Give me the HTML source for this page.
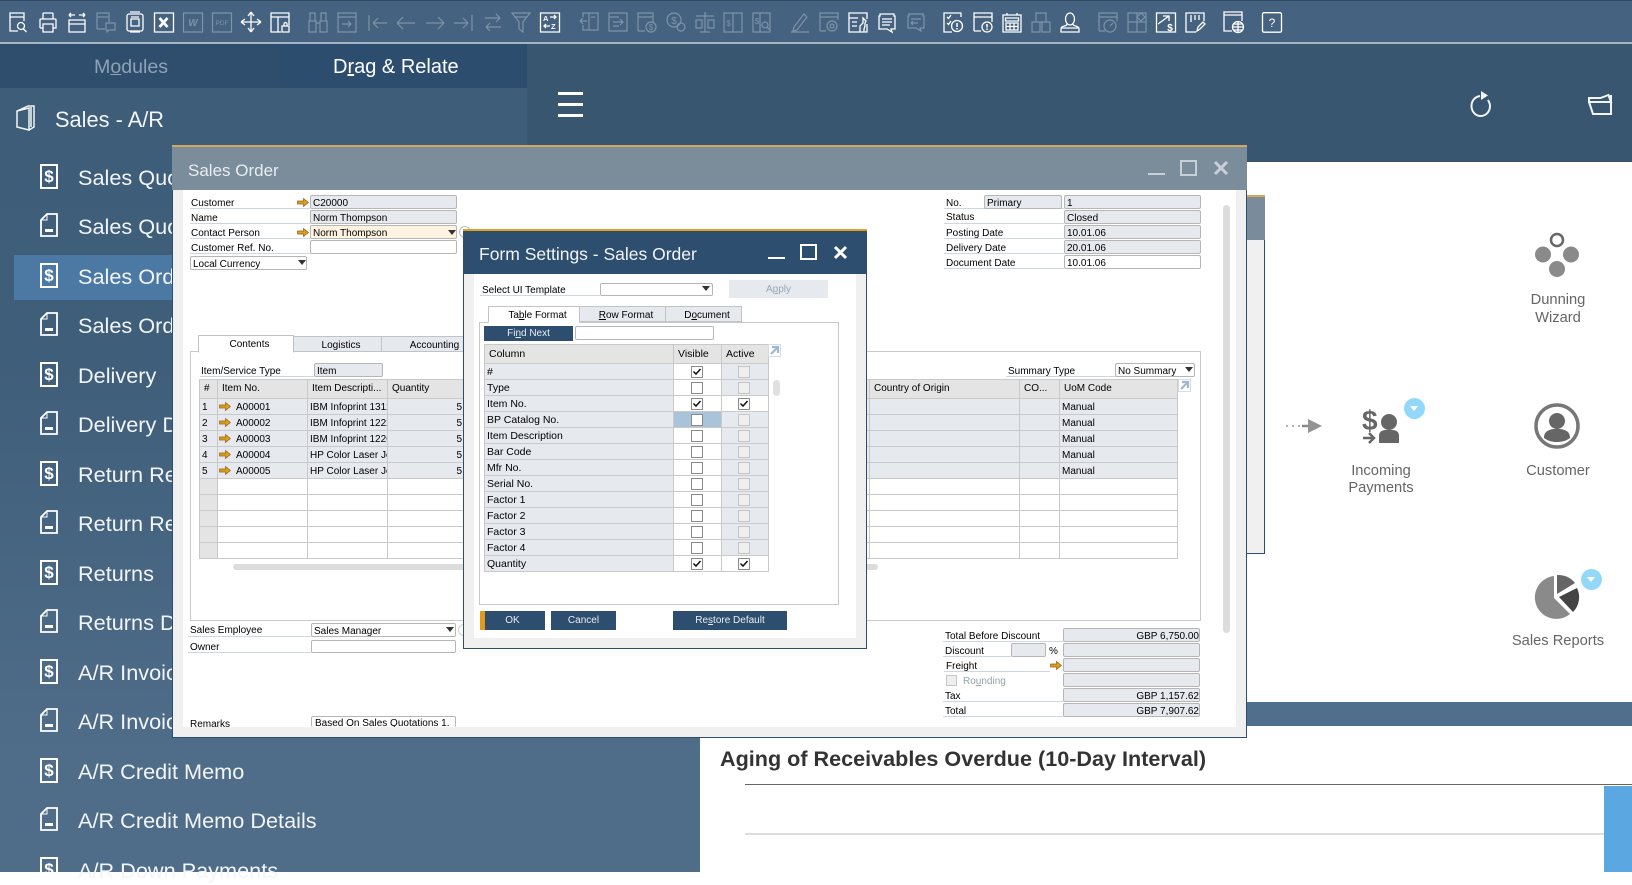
<!DOCTYPE html>
<html><head><meta charset="utf-8"><title>Sales Order</title>
<style>
html,body{margin:0;padding:0}
body{width:1632px;height:872px;position:relative;overflow:hidden;background:#fff;font-family:"Liberation Sans",Arial,sans-serif}
div,span.a,svg.a,table{position:absolute}
.b{left:0;top:0}
.s{left:78px;color:#f2f5f8;font-size:21.7px;line-height:28px;white-space:nowrap}
.di{left:40px;width:14px;height:21px;border:2px solid #fff;color:#fff;font:bold 17px/21px "Liberation Sans",sans-serif;text-align:center}
.dd{left:40px}
.w{font-size:10px;color:#000;line-height:14px;white-space:nowrap}
.t{font-size:10px;color:#000;line-height:16px;white-space:nowrap}
.u{height:1px;background:#ced6de}
.f{box-sizing:border-box;height:14px;border:1px solid #b6b6b6;border-radius:2px;background:#e6e9ee;font-size:10px;line-height:16px;padding-left:2px;color:#000;white-space:nowrap;overflow:hidden}
.o{background:#fff}
.tr{width:0;height:0;border-left:4px solid transparent;border-right:4px solid transparent;border-top:5px solid #333}
.tab{box-sizing:border-box;background:#e6e9ee;border:1px solid #bfc4c9;border-bottom:1px solid #bfc4c9;font-size:10px;color:#000;text-align:center;line-height:18px;padding-left:7px;white-space:nowrap;overflow:hidden}
.fr{box-sizing:border-box;border:1px solid #c9c9c9;background:#fff}
table{border-collapse:collapse;table-layout:fixed;font-size:10px;color:#000}
td{border:1px solid #c9c9c9;padding:0 0 0 2px;height:16px;line-height:14px;white-space:nowrap;overflow:hidden;box-sizing:border-box}
tr.h td{background:#e4e4e4;height:19px;padding-left:4px}
tr.g td{background:#e6e9ee}
.sg tr.g td{padding-top:2px;line-height:13px}
td.n{background:#e4e4e4!important}
td.p{background:#fff!important;padding:0}
td.q{background:#e6e9ee!important;padding:0}
td.bl{background:#a9c3d9!important;padding:0}
td.r{text-align:right;padding-right:1px}
.dlg{font-size:10.5px}
.ck{position:relative;display:block;box-sizing:border-box;width:12px;height:12px;margin:1px 0 0 17px;border:1px solid #8b8b8b;background:#fff}
.ck2{margin-left:16px}
.dis{border-color:#c5c5c5;background:#eee}
.ck svg{position:absolute;left:0;top:0}
.bt{box-sizing:border-box;height:19px;background:#2d4e6e;color:#e8edf2;font-size:10px;line-height:19px;text-align:center;white-space:nowrap}
.lb{font-size:14.7px;color:#666;text-align:center;line-height:18px;white-space:nowrap}
.badge{width:21px;height:21px;border-radius:50%;background:#93d8f8}
.badge:after{content:"";position:absolute;left:6px;top:8px;border-left:4.5px solid transparent;border-right:4.5px solid transparent;border-top:5px solid #fff}
svg .w1{fill:none;stroke:#fff;stroke-width:1.3}
svg .d1{fill:none;stroke:#7d93a8;stroke-width:1.2}
</style></head>
<body>
<svg width="0" height="0" style="position:absolute"><defs>
<symbol id="ar" viewBox="0 0 12 9"><path d="M.5 3H6.500V.5L11.500 4.500 6.500 8.500V6H.5z" fill="#e09a1c" stroke="#8a6414" stroke-width=".7"/></symbol>
<symbol id="chk" viewBox="0 0 10 10"><path d="M1.500 4.500l2.500 2.500 4.500-5" fill="none" stroke="#111" stroke-width="1.500"/></symbol>
<symbol id="ddoc" viewBox="0 0 18 24"><path d="M1 7 7 1h10v22H1z" fill="none" stroke="#fff" stroke-width="1.800"/><path d="M5 16h8v3H5z" fill="#fff"/><path d="M7 1v6H1" fill="none" stroke="#fff" stroke-width="1"/></symbol>
<symbol id="exp" viewBox="0 0 13 13"><path d="M.5.500h12v12H.500z" fill="#fff" stroke="#d5dde4"/><path d="M3 10 9 4M4 3h6v6" fill="none" stroke="#9db8d0" stroke-width="2.200"/></symbol>
</defs></svg>

<!-- backgrounds -->
<div class="b" style="width:1632px;height:44px;background:#456380"></div>
<div class="b" style="width:1632px;height:1px;background:#2f4a63"></div>
<div style="left:0;top:42px;width:1632px;height:2px;background:#a4b5c3"></div>
<div style="left:0;top:44px;width:1632px;height:118px;background:#38566f"></div>
<div style="left:0;top:88px;width:700px;height:784px;background:linear-gradient(#3e5d79,#3f5e7a 35%,#4f6d88 85%)"></div>
<div style="left:527px;top:88px;width:173px;height:74px;background:#38566f"></div>
<div style="left:0;top:44px;width:280px;height:44px;background:#2f4e6e"></div>
<div style="left:280px;top:44px;width:247px;height:44px;background:#2d4d6f"></div>
<div style="left:700px;top:162px;width:932px;height:710px;background:#fff"></div>
<div style="left:1240px;top:702px;width:392px;height:24px;background:#4f6f8c"></div>

<!-- toolbar icons -->
<svg class="a" style="left:0;top:0" width="1632" height="44" font-family="Liberation Sans">
<g transform="translate(9,12)" class="w1"><path class="w1" d="M15 9V1H1v18h8M1 5h14M14 16.500l3.500 3.500"/><circle class="w1" cx="12" cy="14" r="3.500"/></g>
<g transform="translate(38,12)"><path class="w1" d="M5 7V2a1 1 0 0 1 1-1h8a1 1 0 0 1 1 1v5M2 16V8a1 1 0 0 1 1-1h14a1 1 0 0 1 1 1v8H15M5 16H2M5 12h10v8H5z"/></g>
<g transform="translate(67,12)"><path class="w1" d="M2 8h16v12H2zM2 12h16M2 3h6M2 3l2-2M2 3l2 2M12 3h6M18 3l-2-2M18 3l-2 2"/></g>
<g transform="translate(96,12)"><path class="d1" d="M1 17V1h12v9M1 5h12M1 17h8"/><path class="d1" d="M10 11h9v7h-6l-2 2v-2h-1z"/></g>
<g transform="translate(125,12)"><path class="w1" d="M2 4a2 2 0 0 1 2-2h12a2 2 0 0 1 2 2v13a2 2 0 0 1-2 2H4a2 2 0 0 1-2-2zM6 7h8v7H6zM6 5h8M5 0h10M5 20h10"/></g>
<g transform="translate(154,12)"><path class="w1" d="M.5 1h19v19H.5z"/><path d="M5.500 6l8 9M13.500 6l-8 9" stroke="#fff" stroke-width="2.800" fill="none"/></g>
<g transform="translate(183,12)"><path class="d1" d="M.5 1h19v19H.5z"/><text x="10" y="14" fill="#7d93a8" font-size="10" font-weight="bold" font-style="italic" text-anchor="middle">W</text></g>
<g transform="translate(212,12)"><path class="d1" d="M.5 1h19v19H.5z"/><text x="10" y="13" fill="#7d93a8" font-size="6.500" text-anchor="middle">PDF</text></g>
<g transform="translate(241,12)"><path class="w1" d="M10 0v20M0 10h20M10 0 7 4M10 0l3 4M0 10l4-3M0 10l4 3M20 10l-4-3M20 10l-4 3M10 20l-3-4M10 20l3-4"/></g>
<g transform="translate(270,12)"><path class="w1" d="M1 1h18v4H1zM1 5v15h10M8 5v15M19 5v8M12 14h7v6h-7zM14 14v-2a1.500 1.500 0 0 1 3 0v2"/></g>
<g transform="translate(308,12)"><path class="d1" d="M1 9h7v11H1zM12 9h7v11h-7zM8 11h4M2 9V1h5v8M13 9V1h5v8"/></g>
<g transform="translate(337,12)"><path class="d1" d="M1 1h18v19H1zM1 5h18M5 12h9M11 9l3 3-3 3"/></g>
<g transform="translate(368,12)"><path class="d1" d="M1 3v16M5 11h14M5 11l5-5M5 11l5 5"/></g>
<g transform="translate(396,12)"><path class="d1" d="M1 11h18M1 11l6-6M1 11l6 6"/></g>
<g transform="translate(425,12)"><path class="d1" d="M1 11h18M19 11l-6-6M19 11l-6 6"/></g>
<g transform="translate(453,12)"><path class="d1" d="M19 3v16M1 11h14M15 11l-5-5M15 11l-5 5"/></g>
<g transform="translate(483,12)"><path class="d1" d="M2 6h15M17 6l-4-4M17 6l-4 4M18 15H3M3 15l4-4M3 15l4 4"/></g>
<g transform="translate(511,12)"><path class="d1" d="M1 1h18l-7 9v10l-4-3V10zM4 5h12"/></g>
<g transform="translate(540,12)"><path class="w1" d="M.5 1h19v19H.5z"/><text x="3" y="9" fill="#fff" font-size="7.500" font-weight="bold">A</text><text x="11" y="17" fill="#fff" font-size="7.500" font-weight="bold">Z</text><path class="w1" stroke-width="1" d="M10 5h6M14 3l2 2-2 2M10 14H4M6 12l-2 2 2 2"/></g>
<g transform="translate(579,12)"><path class="d1" d="M4 5V1h15v17H4v-5M4 5v0M10 1v17M1 9h7M1 9l3-3M1 9l3 3M12 5h4"/></g>
<g transform="translate(608,12)"><path class="d1" d="M1 1h18v18H1zM1 5h10M5 10h10M12 7l3 3-3 3M5 14h6"/></g>
<g transform="translate(637,12)"><path class="d1" d="M1 19V1h15v9M1 5h15M1 19h7"/><circle class="d1" cx="14" cy="15" r="5"/><text x="14" y="18" fill="#7d93a8" font-size="8" text-anchor="middle">$</text></g>
<g transform="translate(666,12)"><circle class="d1" cx="8" cy="8" r="7"/><text x="8" y="12" fill="#7d93a8" font-size="10" text-anchor="middle">$</text><circle class="d1" cx="15" cy="15" r="4"/></g>
<g transform="translate(695,12)"><path class="d1" d="M10 0v20M5 20h10M1 4h18M1 8v8h6V8zM13 8v8h6V8z"/></g>
<g transform="translate(723,12)"><path class="d1" d="M1 1h18v19H1zM10 1v19"/><text x="5.500" y="14" fill="#7d93a8" font-size="8" text-anchor="middle">$</text></g>
<g transform="translate(752,12)"><path class="d1" d="M1 1h17v19H1zM8 1v19"/><text x="5" y="12" fill="#7d93a8" font-size="8" text-anchor="middle">$</text><circle class="d1" cx="13" cy="13" r="3"/><path class="d1" d="M15 15l3 3"/></g>
<g transform="translate(790,12)"><path class="d1" d="M1 20h18M4 15 14 2l3 3L7 18l-4 1z"/></g>
<g transform="translate(819,12)"><path class="d1" d="M1 19V1h18v7M1 5h18M1 19h6"/><circle class="d1" cx="13" cy="14" r="5"/><circle class="d1" cx="13" cy="14" r="2"/></g>
<g transform="translate(848,12)"><path class="w1" d="M19 7V1H1v19h18v-8M1 6h9M4 10h5M4 14h5M12 20v-6l3-3V6l3 3-1 2v3l-1 3v3"/></g>
<g transform="translate(877,12)"><path class="w1" d="M3 2h14v2h1v13h-4l1 3-5-3H2V4h1zM5 7h10M5 10h10M5 13h8"/></g>
<g transform="translate(906,12)"><path class="d1" d="M3 2h14v2h1v12h-4l1 3-5-3H2V4h1zM5 7h10M5 11h7M5 11l2-2M5 11l2 2"/></g>
<g transform="translate(943,12)"><path class="w1" d="M18 5V1H1v19h8M4 5l1.500 1.500L8 3M4 11l1.500 1.500L8 9"/><circle class="w1" cx="14" cy="14" r="5.500"/><path d="M14 11v4M14 16v1.500" stroke="#fff" stroke-width="1.500"/></g>
<g transform="translate(973,12)"><path class="w1" d="M1 19V1h18v9M1 5h18M1 19h7"/><circle class="w1" cx="14" cy="15" r="5"/><path d="M14 12v3.500M14 16.500V18" stroke="#fff" stroke-width="1.500"/></g>
<g transform="translate(1002,12)"><path class="w1" d="M1 3h18v17H1zM5 1v2M15 1v2M3.500 6h13v3h-13zM4 11h12v7H4zM8 11v7M12 11v7M4 14.500h12"/></g>
<g transform="translate(1031,12)"><path class="d1" d="M5 1h10v9H5zM1 10h8v10H1zM11 10h8v10h-8z"/></g>
<g transform="translate(1060,12)"><ellipse class="w1" cx="10" cy="7" rx="4.500" ry="6"/><path class="w1" d="M7 12c0 3-6 1-6 5v3h18v-3c0-4-6-2-6-5"/><path class="w1" d="M1 16h18"/></g>
<g transform="translate(1098,12)"><path class="d1" d="M1 19V1h18v8M1 5h18M1 19h6"/><circle class="d1" cx="12" cy="14" r="6"/><path class="d1" d="M12 14l3-3"/></g>
<g transform="translate(1127,12)"><path class="d1" d="M1 1h18v19H1zM1 10h18M10 1v19"/><path class="d1" d="M10 5l4-4 4 4-4 4z"/></g>
<g transform="translate(1156,12)"><path class="w1" d="M.5 1h19v19H.5zM2 12 13 4M7 4h6v5"/><text x="14" y="19" fill="#fff" font-size="10" font-weight="bold" text-anchor="middle">$</text></g>
<g transform="translate(1185,12)"><path class="w1" d="M19 9V1H1v19h10M6 10V3M10 8V3M14 8V3"/><path class="w1" d="M12 19l1-4 5-5 2 2-5 5z"/></g>
<g transform="translate(1223,11)"><path class="w1" d="M1 15V1h18v9M1 4h18"/><path class="w1" d="M1 15v5h8"/><circle class="w1" cx="15" cy="16" r="5.500"/><path class="w1" stroke-width="1" d="M9.500 16h11M15 10.500v11M11 13h8M11 19h8"/></g>
<g transform="translate(1262,12)"><rect class="w1" x=".5" y=".7" width="19" height="19.500" rx="1.500"/><text x="10" y="15" fill="#fff" font-size="12" text-anchor="middle">?</text></g>
</svg>

<!-- module tabs -->
<div class="w" style="left:94px;top:54px;font-size:19.600px;line-height:26px;color:#8ea2b4">M<u>o</u>dules</div>
<div class="w" style="left:333px;top:54px;font-size:20px;line-height:26px;color:#fff">D<u>r</u>ag &amp; Relate</div>

<!-- hamburger + top icons -->
<div style="left:558px;top:92px;width:25px;height:3px;background:#fff"></div>
<div style="left:558px;top:103px;width:25px;height:3px;background:#fff"></div>
<div style="left:558px;top:114px;width:25px;height:3px;background:#fff"></div>
<svg class="a" style="left:1468px;top:90px" width="28" height="30"><path d="M12 6C6.500 7 3.500 11 3.500 16c0 5.500 4 10 9 10 6 0 9.500-5 9.500-10 0-2.500-1-4-2-6" fill="none" stroke="#f2f5f8" stroke-width="2"/><path d="M13 1v9l7-4.500z" fill="#f2f5f8"/></svg>
<svg class="a" style="left:1586px;top:93px" width="28" height="24"><path d="M3 9h22l-2.500-7-8 3H3zM3 9l4 12h18V2" fill="none" stroke="#f2f5f8" stroke-width="2"/></svg>

<!-- sidebar -->
<svg class="a" style="left:14px;top:105px" width="24" height="27"><path d="M3 6 15 3v22L3 22zM3 6l11-5h6v21l-5 3M17 2v20" fill="none" stroke="#f2f5f8" stroke-width="1.500"/></svg>
<div class="s" style="left:55px;top:106px;font-size:21.800px">Sales - A/R</div>
<div style="left:14px;top:255px;width:200px;height:45px;background:#4b79a4"></div>

<div class="di" style="top:164px">$</div><div class="s" style="top:164px">Sales Quotation</div>
<svg class="a" style="left:40px;top:213px" width="18" height="24"><use href="#ddoc"/></svg><div class="s" style="top:213px">Sales Quotation Details</div>
<div class="di" style="top:263px">$</div><div class="s" style="top:263px">Sales Order</div>
<svg class="a" style="left:40px;top:312px" width="18" height="24"><use href="#ddoc"/></svg><div class="s" style="top:312px">Sales Order Details</div>
<div class="di" style="top:362px">$</div><div class="s" style="top:362px">Delivery</div>
<svg class="a" style="left:40px;top:411px" width="18" height="24"><use href="#ddoc"/></svg><div class="s" style="top:411px">Delivery Details</div>
<div class="di" style="top:461px">$</div><div class="s" style="top:461px">Return Request</div>
<svg class="a" style="left:40px;top:510px" width="18" height="24"><use href="#ddoc"/></svg><div class="s" style="top:510px">Return Request Details</div>
<div class="di" style="top:560px">$</div><div class="s" style="top:560px">Returns</div>
<svg class="a" style="left:40px;top:609px" width="18" height="24"><use href="#ddoc"/></svg><div class="s" style="top:609px">Returns Details</div>
<div class="di" style="top:659px">$</div><div class="s" style="top:659px">A/R Invoice</div>
<svg class="a" style="left:40px;top:708px" width="18" height="24"><use href="#ddoc"/></svg><div class="s" style="top:708px">A/R Invoice Details</div>
<div class="di" style="top:758px">$</div><div class="s" style="top:758px">A/R Credit Memo</div>
<svg class="a" style="left:40px;top:807px" width="18" height="24"><use href="#ddoc"/></svg><div class="s" style="top:807px">A/R Credit Memo Details</div>
<div class="di" style="top:857px">$</div><div class="s" style="top:857px">A/R Down Payments</div>

<!-- right panel content -->
<svg class="a" style="left:1532px;top:228px" width="50" height="52"><circle cx="25" cy="12" r="6" fill="none" stroke="#666" stroke-width="2.500"/><circle cx="11" cy="26.500" r="8" fill="#8a8a8a"/><circle cx="39" cy="26.500" r="8" fill="#8a8a8a"/><circle cx="25" cy="41" r="8" fill="#8a8a8a"/></svg>
<div class="lb" style="left:1508px;width:100px;top:291px">Dunning</div>
<div class="lb" style="left:1508px;width:100px;top:309px">Wizard</div>

<svg class="a" style="left:1284px;top:414px" width="42" height="24"><path d="M2 12h16" stroke="#999" stroke-width="1.500" stroke-dasharray="2 4" fill="none"/><path d="M18 12h11" stroke="#888" stroke-width="2.500"/><path d="M24 5l14 7-14 7z" fill="#939393"/></svg>
<svg class="a" style="left:1360px;top:403px" width="44" height="44" font-family="Liberation Sans"><text x="2" y="27" font-size="28" font-weight="bold" fill="#666">$</text><circle cx="29" cy="19" r="8" fill="#666"/><path d="M19 40V33c0-5 4-6 7-6h6c3 0 7 1 7 6v7z" fill="#666"/><path d="M3 35h9M9 30l5 5-5 5" fill="none" stroke="#666" stroke-width="2.500"/></svg>
<div class="badge" style="left:1404px;top:398px"></div>
<div class="lb" style="left:1331px;width:100px;top:462px">Incoming</div>
<div class="lb" style="left:1331px;width:100px;top:479px">Payments</div>

<svg class="a" style="left:1533px;top:402px" width="48" height="48"><circle cx="24" cy="24" r="21" fill="none" stroke="#777" stroke-width="3.500"/><circle cx="24" cy="19" r="8" fill="#666"/><path d="M11 36c0-7 5-8 9-9h8c4 1 9 2 9 9-4 3-8 4-13 4s-9-1-13-4z" fill="#666"/></svg>
<div class="lb" style="left:1508px;width:100px;top:462px">Customer</div>

<svg class="a" style="left:1530px;top:570px" width="54" height="54"><path d="M24 6V28L40 44A21.500 21.500 0 1 1 24 6z" fill="#8a8a8a"/><path d="M27 5V24L45 13A21 21 0 0 0 27 5z" fill="#666"/><path d="M29 27 47 18A21 21 0 0 1 43 42z" fill="#444"/></svg>
<div class="badge" style="left:1581px;top:569px"></div>
<div class="lb" style="left:1500px;width:116px;top:632px">Sales Reports</div>

<div class="w" style="left:720px;top:745px;font-size:21.600px;line-height:28px;font-weight:bold;color:#333">Aging of Receivables Overdue (10-Day Interval)</div>
<div style="left:745px;top:784px;width:887px;height:1px;background:#666"></div>
<div style="left:745px;top:833px;width:859px;height:2px;background:#ddd"></div>
<div style="left:1604px;top:786px;width:28px;height:86px;background:#5ba7e2"></div>

<!-- window behind -->
<div style="left:1240px;top:195px;width:25px;height:359px;box-sizing:border-box;background:#f0f0f0;border-right:1px solid #2d4e6e;border-bottom:1px solid #2d4e6e"></div>
<div style="left:1240px;top:195px;width:25px;height:45px;background:#7a8c9b;border-top:2px solid #d4a85a;box-sizing:border-box"></div>

<!-- Sales Order window -->
<div style="left:172px;top:145px;width:1075px;height:593px;box-sizing:border-box;background:#f0f0f0;border:1px solid #2d4e6e;border-top:0"></div>
<div style="left:183px;top:190px;width:1053px;height:537px;background:#fff"></div>
<div style="left:172px;top:145px;width:1075px;height:45px;box-sizing:border-box;background:#7b8c9b;border-top:2px solid #d2a860"></div>
<div class="w" style="left:188px;top:159px;font-size:17px;line-height:24px;color:#e8edf1">Sales Order</div>
<div style="left:1148px;top:173px;width:17px;height:2px;background:#c7d0d8"></div>
<div style="left:1180px;top:160px;width:17px;height:16px;box-sizing:border-box;border:2px solid #c7d0d8"></div>
<svg class="a" style="left:1213px;top:160px" width="16" height="16"><path d="M2 2 14 14M14 2 2 14" stroke="#c7d0d8" stroke-width="3"/></svg>

<!-- top-left fields -->
<div class="u" style="left:190px;top:208px;width:120px"></div>
<div class="u" style="left:190px;top:223px;width:120px"></div>
<div class="u" style="left:190px;top:238px;width:120px"></div>
<div class="u" style="left:190px;top:253px;width:120px"></div>
<div class="t" style="left:191px;top:196px">Customer</div>
<div class="t" style="left:191px;top:211px">Name</div>
<div class="t" style="left:191px;top:226px">Contact Person</div>
<div class="t" style="left:191px;top:241px">Customer Ref. No.</div>
<svg class="a" style="left:297px;top:198px" width="12" height="9"><use href="#ar"/></svg>
<svg class="a" style="left:297px;top:228px" width="12" height="9"><use href="#ar"/></svg>
<div class="f" style="left:310px;top:195px;width:147px">C20000</div>
<div class="f" style="left:310px;top:210px;width:147px">Norm Thompson</div>
<div class="f" style="left:310px;top:225px;width:147px;background:#fdf3e0">Norm Thompson</div>
<div class="tr" style="left:448px;top:230px"></div>
<div class="f o" style="left:310px;top:240px;width:147px"></div>
<div class="f o" style="left:190px;top:256px;width:117px">Local Currency</div>
<div class="tr" style="left:298px;top:260px"></div>
<div style="left:459px;top:226px;width:12px;height:12px;box-sizing:border-box;border:1px solid #bbb;border-radius:50%;background:#fff"></div>

<!-- top-right fields -->
<div class="u" style="left:944px;top:208px;width:120px"></div>
<div class="u" style="left:944px;top:223px;width:120px"></div>
<div class="u" style="left:944px;top:238px;width:120px"></div>
<div class="u" style="left:944px;top:253px;width:120px"></div>
<div class="u" style="left:944px;top:268px;width:120px"></div>
<div class="t" style="left:946px;top:196px">No.</div>
<div class="t" style="left:946px;top:210px">Status</div>
<div class="t" style="left:946px;top:226px">Posting Date</div>
<div class="t" style="left:946px;top:241px">Delivery Date</div>
<div class="t" style="left:946px;top:256px">Document Date</div>
<div class="f" style="left:984px;top:195px;width:78px">Primary</div>
<div class="f" style="left:1064px;top:195px;width:137px">1</div>
<div class="f" style="left:1064px;top:210px;width:137px">Closed</div>
<div class="f" style="left:1064px;top:225px;width:137px">10.01.06</div>
<div class="f" style="left:1064px;top:240px;width:137px">20.01.06</div>
<div class="f o" style="left:1064px;top:255px;width:137px">10.01.06</div>

<!-- scrollbars -->
<div style="left:1223px;top:205px;width:7px;height:428px;border-radius:4px;background:#dcdcdc"></div>

<!-- tabs & frame -->
<div class="fr" style="left:190px;top:351px;width:1011px;height:270px"></div>
<div class="tab" style="left:198px;top:335px;width:96px;height:18px;background:#fff;border-bottom:1px solid #fff">Contents</div>
<div class="tab" style="left:293px;top:336px;width:89px;height:16px">Logistics</div>
<div class="tab" style="left:381px;top:336px;width:100px;height:16px">Accounting</div>

<div class="u" style="left:200px;top:376px;width:114px"></div>
<div class="t" style="left:201px;top:364px">Item/Service Type</div>
<div class="f" style="left:314px;top:363px;width:69px">Item</div>
<div class="u" style="left:1006px;top:376px;width:110px"></div>
<div class="t" style="left:1008px;top:364px">Summary Type</div>
<div class="f o" style="left:1115px;top:363px;width:80px">No Summary</div>
<div class="tr" style="left:1185px;top:367px"></div>
<svg class="a" style="left:1178px;top:379px" width="13" height="13"><use href="#exp"/></svg>

<table class="sg" style="left:199px;top:379px;width:978px">
<colgroup><col style="width:18px"><col style="width:90px"><col style="width:80px"><col style="width:76px"><col style="width:406px"><col style="width:150px"><col style="width:40px"><col style="width:118px"></colgroup>
<tr class="h"><td>#</td><td>Item No.</td><td>Item Descripti...</td><td>Quantity</td><td></td><td>Country of Origin</td><td>CO...</td><td>UoM Code</td></tr>
<tr class="g"><td>1</td><td style="padding-left:18px">A00001</td><td>IBM Infoprint 1312</td><td class="r">5</td><td></td><td></td><td></td><td>Manual</td></tr>
<tr class="g"><td>2</td><td style="padding-left:18px">A00002</td><td>IBM Infoprint 1222</td><td class="r">5</td><td></td><td></td><td></td><td>Manual</td></tr>
<tr class="g"><td>3</td><td style="padding-left:18px">A00003</td><td>IBM Infoprint 1226</td><td class="r">5</td><td></td><td></td><td></td><td>Manual</td></tr>
<tr class="g"><td>4</td><td style="padding-left:18px">A00004</td><td>HP Color Laser Jet</td><td class="r">5</td><td></td><td></td><td></td><td>Manual</td></tr>
<tr class="g"><td>5</td><td style="padding-left:18px">A00005</td><td>HP Color Laser Jet</td><td class="r">5</td><td></td><td></td><td></td><td>Manual</td></tr>
<tr><td class="n"></td><td></td><td></td><td></td><td></td><td></td><td></td><td></td></tr>
<tr><td class="n"></td><td></td><td></td><td></td><td></td><td></td><td></td><td></td></tr>
<tr><td class="n"></td><td></td><td></td><td></td><td></td><td></td><td></td><td></td></tr>
<tr><td class="n"></td><td></td><td></td><td></td><td></td><td></td><td></td><td></td></tr>
<tr><td class="n"></td><td></td><td></td><td></td><td></td><td></td><td></td><td></td></tr>
</table>
<svg class="a" style="left:219px;top:402px" width="12" height="9"><use href="#ar"/></svg>
<svg class="a" style="left:219px;top:418px" width="12" height="9"><use href="#ar"/></svg>
<svg class="a" style="left:219px;top:434px" width="12" height="9"><use href="#ar"/></svg>
<svg class="a" style="left:219px;top:450px" width="12" height="9"><use href="#ar"/></svg>
<svg class="a" style="left:219px;top:466px" width="12" height="9"><use href="#ar"/></svg>
<div style="left:233px;top:564px;width:645px;height:6px;border-radius:3px;background:#dcdcdc"></div>

<!-- lower-left -->
<div class="u" style="left:188px;top:636px;width:123px"></div>
<div class="u" style="left:188px;top:652px;width:123px"></div>
<div class="t" style="left:190px;top:623px">Sales Employee</div>
<div class="t" style="left:190px;top:640px">Owner</div>
<div class="f o" style="left:311px;top:623px;width:145px">Sales Manager</div>
<div class="tr" style="left:446px;top:627px"></div>
<div class="f o" style="left:311px;top:640px;width:145px;height:13px"></div>
<div style="left:458px;top:624px;width:12px;height:12px;box-sizing:border-box;border:1px solid #ccc;border-radius:50%;background:#fff"></div>
<div class="t" style="left:190px;top:717px">Remarks</div>
<div class="f o" style="left:311px;top:716px;width:145px;height:11px;border-bottom:0;padding-left:3px;line-height:14px">Based On Sales Quotations 1.</div>

<!-- totals -->
<div class="u" style="left:943px;top:641px;width:120px"></div>
<div class="u" style="left:943px;top:656px;width:68px"></div>
<div class="u" style="left:944px;top:671px;width:106px"></div>
<div class="u" style="left:943px;top:701px;width:120px"></div>
<div class="u" style="left:943px;top:716px;width:120px"></div>
<div class="t" style="left:945px;top:629px">Total Before Discount</div>
<div class="t" style="left:945px;top:644px">Discount</div>
<div class="t" style="left:946px;top:659px">Freight</div>
<div style="left:946px;top:675px;width:11px;height:11px;box-sizing:border-box;border:1px solid #c5c5c5;background:#eee"></div>
<div class="t" style="left:963px;top:674px;color:#8fa5a8">Ro<u>u</u>nding</div>
<div class="t" style="left:945px;top:689px">Tax</div>
<div class="t" style="left:945px;top:704px">Total</div>
<div class="f" style="left:1011px;top:643px;width:35px"></div>
<div class="t" style="left:1049px;top:644px">%</div>
<svg class="a" style="left:1050px;top:661px" width="12" height="9"><use href="#ar"/></svg>
<div class="f" style="left:1063px;top:628px;width:137px;text-align:right;padding-right:0">GBP 6,750.00</div>
<div class="f" style="left:1063px;top:643px;width:137px"></div>
<div class="f" style="left:1063px;top:658px;width:137px"></div>
<div class="f" style="left:1063px;top:673px;width:137px"></div>
<div class="f" style="left:1063px;top:688px;width:137px;text-align:right;padding-right:0">GBP 1,157.62</div>
<div class="f" style="left:1063px;top:703px;width:137px;text-align:right;padding-right:0">GBP 7,907.62</div>

<!-- Form Settings dialog -->
<div style="left:463px;top:229px;width:404px;height:420px;box-sizing:border-box;background:#f0f0f0;border:1px solid #2d4e6e;border-top:0"></div>
<div style="left:474px;top:274px;width:382px;height:364px;background:#fff"></div>
<div style="left:463px;top:229px;width:404px;height:45px;box-sizing:border-box;background:#2d4e6e;border-top:2px solid #e2a11e"></div>
<div class="w" style="left:479px;top:243px;font-size:17.500px;line-height:22px;color:#f2f5f8">Form Settings - Sales Order</div>
<div style="left:768px;top:257px;width:17px;height:2px;background:#fff"></div>
<div style="left:800px;top:244px;width:17px;height:16px;box-sizing:border-box;border:2px solid #fff"></div>
<svg class="a" style="left:833px;top:245px" width="15" height="15"><path d="M2 2 13 13M13 2 2 13" stroke="#fff" stroke-width="3"/></svg>

<div class="u" style="left:480px;top:295px;width:120px"></div>
<div class="t" style="left:482px;top:283px">Select UI Template</div>
<div class="f o" style="left:600px;top:283px;width:113px;height:13px"></div>
<div class="tr" style="left:702px;top:286px"></div>
<div style="left:729px;top:280px;width:99px;height:18px;background:#e6e9ee;color:#98a7b4;font-size:10px;line-height:20px;text-align:center">A<u>p</u>ply</div>

<div class="fr" style="left:479px;top:322px;width:360px;height:283px"></div>
<div class="tab" style="left:488px;top:306px;width:92px;height:17px;background:#fff;border-bottom:1px solid #fff">Ta<u>b</u>le Format</div>
<div class="tab" style="left:579px;top:306px;width:87px;height:16px"><u>R</u>ow Format</div>
<div class="tab" style="left:665px;top:306px;width:77px;height:16px">D<u>o</u>cument</div>
<div class="bt" style="left:484px;top:326px;width:89px;height:15px;line-height:16px">Fi<u>n</u>d Next</div>
<div class="f o" style="left:575px;top:326px;width:139px"></div>

<table class="dlg" style="left:484px;top:344px;width:284px">
<colgroup><col style="width:189px"><col style="width:48px"><col style="width:47px"></colgroup>
<tr class="h"><td>Column</td><td style="padding-left:4px">Visible</td><td style="padding-left:4px">Active</td></tr>
<tr class="g"><td>#</td><td class="p"><span class="ck"><svg width="10" height="10"><use href="#chk"/></svg></span></td><td class="q"><span class="ck ck2 dis"></span></td></tr>
<tr class="g"><td>Type</td><td class="p"><span class="ck"></span></td><td class="q"><span class="ck ck2 dis"></span></td></tr>
<tr class="g"><td>Item No.</td><td class="p"><span class="ck"><svg width="10" height="10"><use href="#chk"/></svg></span></td><td class="p"><span class="ck ck2"><svg width="10" height="10"><use href="#chk"/></svg></span></td></tr>
<tr class="g"><td>BP Catalog No.</td><td class="bl"><span class="ck"></span></td><td class="q"><span class="ck ck2 dis"></span></td></tr>
<tr class="g"><td>Item Description</td><td class="p"><span class="ck"></span></td><td class="q"><span class="ck ck2 dis"></span></td></tr>
<tr class="g"><td>Bar Code</td><td class="p"><span class="ck"></span></td><td class="q"><span class="ck ck2 dis"></span></td></tr>
<tr class="g"><td>Mfr No.</td><td class="p"><span class="ck"></span></td><td class="q"><span class="ck ck2 dis"></span></td></tr>
<tr class="g"><td>Serial No.</td><td class="p"><span class="ck"></span></td><td class="q"><span class="ck ck2 dis"></span></td></tr>
<tr class="g"><td>Factor 1</td><td class="p"><span class="ck"></span></td><td class="q"><span class="ck ck2 dis"></span></td></tr>
<tr class="g"><td>Factor 2</td><td class="p"><span class="ck"></span></td><td class="q"><span class="ck ck2 dis"></span></td></tr>
<tr class="g"><td>Factor 3</td><td class="p"><span class="ck"></span></td><td class="q"><span class="ck ck2 dis"></span></td></tr>
<tr class="g"><td>Factor 4</td><td class="p"><span class="ck"></span></td><td class="q"><span class="ck ck2 dis"></span></td></tr>
<tr class="g"><td>Quantity</td><td class="p"><span class="ck"><svg width="10" height="10"><use href="#chk"/></svg></span></td><td class="p"><span class="ck ck2"><svg width="10" height="10"><use href="#chk"/></svg></span></td></tr>
</table>
<svg class="a" style="left:768px;top:344px" width="13" height="13"><use href="#exp"/></svg>
<div style="left:773px;top:380px;width:7px;height:16px;border-radius:4px;background:#e0e0e0"></div>

<div class="bt" style="left:480px;top:611px;width:65px;border-left:5px solid #e09a1c;padding-right:5px">OK</div>
<div class="bt" style="left:551px;top:611px;width:65px">Cancel</div>
<div class="bt" style="left:673px;top:611px;width:114px">Re<u>s</u>tore Default</div>
</body></html>
